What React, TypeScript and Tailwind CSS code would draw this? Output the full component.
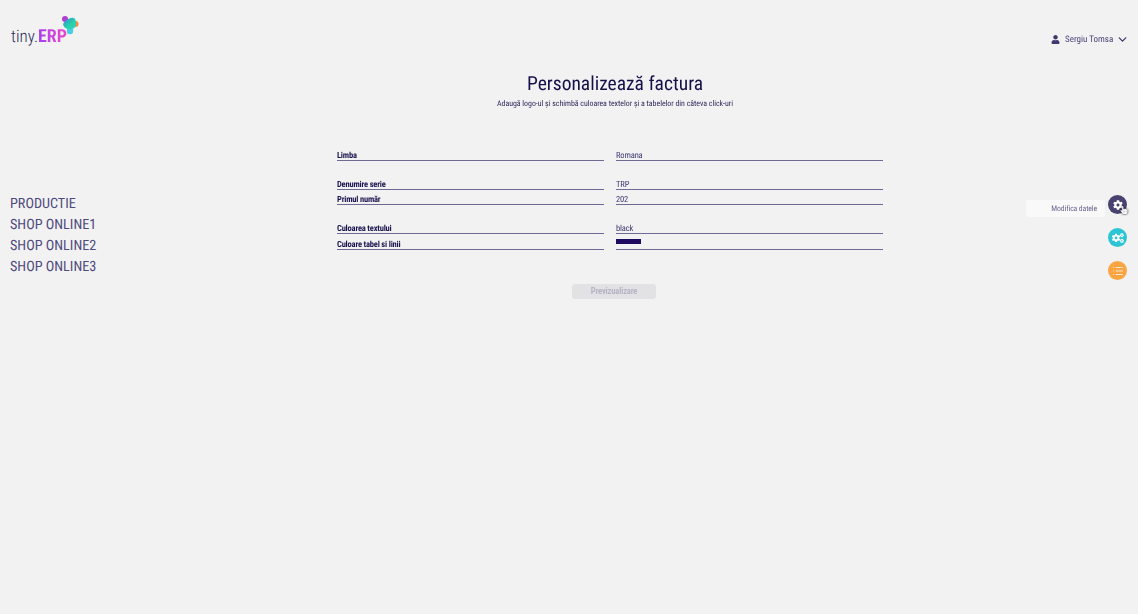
import { ChevronDown, List } from "lucide-react";
import { FaCog, FaCogs, FaHandPointer, FaUser } from "react-icons/fa";

const rows = [
  { label: "Limba", value: "Romana", cls: "h-[16px] mb-[13px] pt-[6px]" },
  { label: "Denumire serie", value: "TRP", cls: "h-[16px] pt-[6px]" },
  { label: "Primul număr", value: "202", cls: "h-[15px] mb-[13px] pt-[5px]" },
  { label: "Culoarea textului", value: "black", cls: "h-[16px] pt-[6px]" },
];

function Logo() {
  return (
    <div className="relative h-[46px] w-[80px]">
      <div className="absolute left-[11px] top-[26px] flex text-[18px] leading-[22px] text-[#2f2a5c]">
        <span className="w-[27px] text-[17px] font-light [font-stretch:75%]">tiny.</span>
        <span className="bg-gradient-to-r from-[#a53cf0] to-[#f044c8] bg-clip-text font-bold text-transparent">
          ERP
        </span>
      </div>
      <svg className="absolute left-[61px] top-[15px]" width="18" height="20" viewBox="0 0 18 20">
        <defs>
          <linearGradient id="blob" x1="0" y1="0" x2="1" y2="1">
            <stop offset="0%" stopColor="#3f7fe8" />
            <stop offset="55%" stopColor="#25d0a8" />
            <stop offset="100%" stopColor="#2fd4d0" />
          </linearGradient>
        </defs>
        <circle cx="4" cy="4" r="3" fill="#b03fd0" />
        <circle cx="14.5" cy="9" r="3" fill="#f58a3c" />
        <circle cx="9" cy="16" r="3.2" fill="#45cfe0" />
        <path d="M2 9 Q5 4 10 3 Q15 2 15 8 Q15 14 10 14 Q3 15 2 9Z" fill="url(#blob)" />
      </svg>
    </div>
  );
}

function Row({ label, value, cls }: { label: string; value: string; cls: string }) {
  return (
    <div className="grid grid-cols-2 gap-x-3">
      <div className={`${cls} border-b border-[#6f6a94] text-[8.5px] font-bold leading-[10px] tracking-[-0.2px] text-[#1c1650]`}>{label}</div>
      <div className={`${cls} border-b border-[#6f6a94] text-[8.5px] leading-[10px] tracking-[-0.15px] text-[#3d3870]`}>{value}</div>
    </div>
  );
}

export default function App() {
  return (
    <div className="h-[614px] w-[1138px] overflow-hidden bg-[#f2f2f2] font-['Roboto',sans-serif] [font-stretch:75%] [text-rendering:geometricPrecision]">
      <header className="flex h-[52px] items-start justify-between pr-[9px]">
        <Logo />
        <div className="mt-[32px] flex h-[14px] items-center text-[9px] text-[#4a4577] will-change-transform">
          <FaUser size={9} className="mr-[5px] text-[#3f3a6e]" />
          <span className="mr-[3px] pt-[3px]">Sergiu Tomsa</span>
          <ChevronDown size={13} strokeWidth={2.5} stroke="#3f3a6e" />
        </div>
      </header>

      <div className="flex">
        <nav className="w-[337px] pl-[10px] pt-[142px] text-[14.2px] leading-[21px] text-[#4f4a7d]">
          <div>PRODUCTIE</div>
          <div>SHOP ONLINE1</div>
          <div>SHOP ONLINE2</div>
          <div>SHOP ONLINE3</div>
        </nav>

        <main className="w-[546px] will-change-transform">
          <div className="pl-[10px] pt-[19px] text-center">
            <h1 className="text-[19.5px] leading-[26px] text-[#15104a]">Personalizează factura</h1>
            <p className="mt-[1px] text-[7.9px] leading-[12px] tracking-[-0.03px] text-[#2f2a5c]">
              Adaugă logo-ul și schimbă culoarea textelor și a tabelelor din câteva click-uri
            </p>
          </div>
          <form className="mt-[35px]">
            {rows.map((r) => (
              <Row key={r.label} {...r} />
            ))}
            <div className="grid grid-cols-2 gap-x-3">
              <div className="h-[16px] border-b border-[#6f6a94] pt-[6px] text-[8.5px] font-bold leading-[10px] tracking-[-0.2px] text-[#1c1650]">
                Culoare tabel si linii
              </div>
              <div className="h-[16px] border-b border-[#6f6a94] pt-[5px]">
                <div className="h-[5px] w-[25px] bg-[#1f0a62]" />
              </div>
            </div>
            <div className="mt-[34px] flex justify-center pl-[8px]">
              <button
                type="button"
                className="h-[15px] w-[84px] rounded-[3px] bg-[#e2e2e4] text-[8.5px] font-bold leading-[15px] tracking-[-0.15px] text-[#b5b3c6]"
              >
                Previzualizare
              </button>
            </div>
          </form>
        </main>

        <aside className="flex flex-1 flex-col items-end pr-[11px] pt-[143px] will-change-transform">
          <div className="flex items-start">
            <div className="mr-[3px] mt-[5px] h-[17px] w-[79px] rounded-[2px] bg-[#f9f9f9] pr-[8px] text-right text-[7.7px] leading-[17px] tracking-[-0.1px] text-[#6a668e]">
              Modifica datele
            </div>
            <div className="relative flex h-[19px] w-[19px] items-center justify-center rounded-full bg-[#47426f]">
              <FaCog size={10} className="text-white" />
              <FaHandPointer size={8} className="absolute left-[12px] top-[11px] text-[#f5f5f5] drop-shadow-[0_0_1px_#000]" />
            </div>
          </div>
          <div className="mt-[11px] flex h-[19px] w-[19px] items-center justify-center rounded-full bg-[#2cc5d3]">
            <FaCogs size={12} className="text-white" />
          </div>
          <div className="mt-[14px] flex h-[19px] w-[19px] items-center justify-center rounded-full bg-[#fba542]">
            <List size={12} stroke="#ffffff" strokeWidth={1.5} />
          </div>
        </aside>
      </div>
    </div>
  );
}
